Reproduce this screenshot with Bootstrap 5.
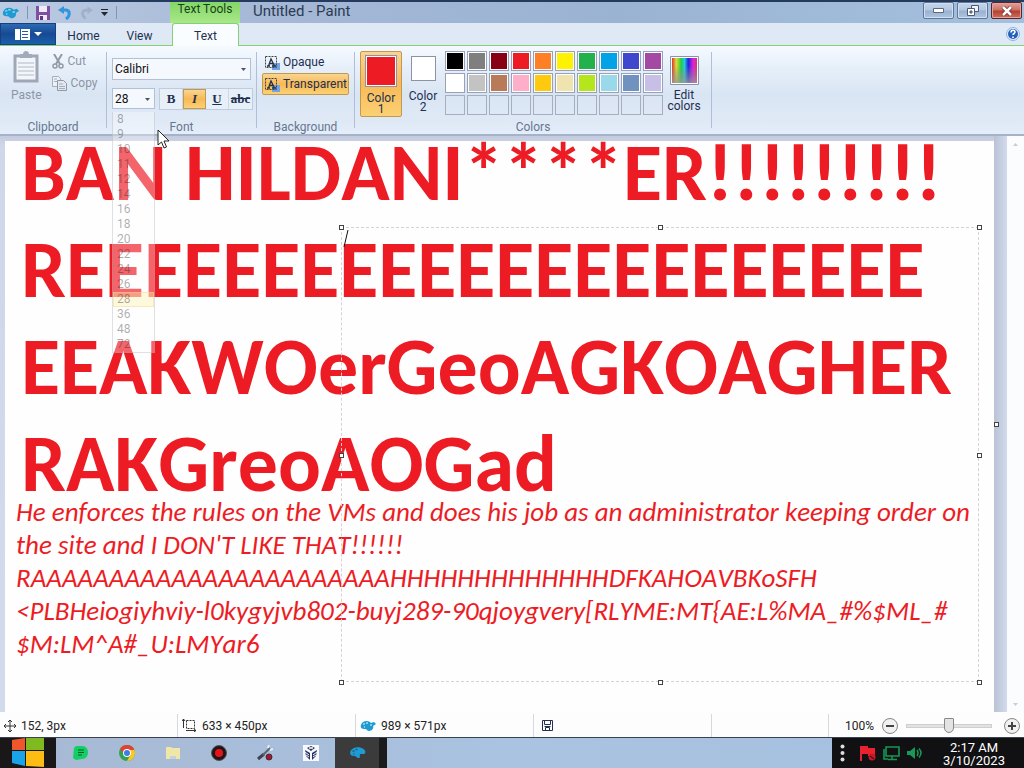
<!DOCTYPE html>
<html lang="en">
<head>
<meta charset="utf-8">
<meta name="viewport" content="width=device-width, initial-scale=1">
<title>Untitled - Paint</title>
<link rel="stylesheet" href="https://cdn.jsdelivr.net/npm/bootstrap@5.3.0/dist/css/bootstrap.min.css">
<style>
body{font:12px/16px Roboto,"Liberation Sans",sans-serif;color:#1e3050;background:#c9d1e5}
button,select,textarea,input{font:inherit;color:inherit;border-radius:0}
button{background:none;border:0;padding:0}
svg{display:block;flex:none}
.titlebar{height:23px;border-top:2px solid #243b5e;background:linear-gradient(90deg,#bccbe2,#a5b8d6 25%,#9bb3d3 60%,#a4c0df)}
.quick{width:170px;padding-left:2px}
.quick .rule{width:1px;height:13px;background:#8394b0}
.tooltab{width:70px;height:21px;background:linear-gradient(#83d765,#a9e889);color:#17421b;text-align:center;line-height:15px}
.apptitle{font-size:15px;line-height:18px;color:#2c3a52;padding-left:13px}
.controls{gap:3px;margin-right:2px}
.winbtn{width:31px;height:17px;border:1px solid #5e7697;border-radius:2px;background:linear-gradient(#c6d6ea,#b2c7e0 48%,#98b1cf 52%,#aec5df);box-shadow:inset 0 0 0 1px #d2dfee}
.winbtn.shut{background:linear-gradient(#dea19a,#cb6f63 48%,#b53d30 52%,#cc6e5b);border-color:#5c2329;box-shadow:inset 0 0 0 1px #e0a49d}
.tabs{height:23px;background:#dfe9f5;border-bottom:1px solid #86cf73}
.tabs .tab{text-align:center;line-height:26px;height:23px}
.tabs .tab.file{width:56px;background:linear-gradient(#2e69b3,#164a93 50%,#1c5fae);border:1px solid #17407e;height:22px}
.tab.home{width:55px}
.tab.view{width:57px}
.tabs .tab.on{width:67px;background:#fafdff;border:1px solid #86cf73;border-bottom:0;border-radius:3px 3px 0 0;line-height:24px}
.ribbon{height:90px;background:linear-gradient(#f5faff,#e6eff9 25%,#dae5f4 55%,#dfe9f6 85%,#e4eefa);border-bottom:2px solid #a6b2c9}
.group{position:relative;padding-top:5px;height:82px;margin-right:1px}
.group::after{content:"";position:absolute;right:-1px;top:6px;bottom:0;width:1px;background:#b0bfd5}
.group .caption{position:absolute;left:0;right:0;bottom:-7px;text-align:center;color:#66768f}
.g-clip{width:106px;color:#8c95a5}
.g-clip .paste{padding-left:11px}
.g-clip .edits{padding-left:10px;padding-top:2px;gap:6px}
.g-font{width:149px;padding-left:5px}
.g-back{width:97px;padding-left:5px}
.g-color{width:356px;padding-left:5px}
.combo{position:relative;border:1px solid #b3c1d6;background:#f5f9fe;color:#111}
.combo.face{width:139px;height:22px;margin-top:7px}
.combo.size{width:43px;height:21px}
.combo select{appearance:none;border:0;background:none;width:100%;height:100%;padding:0 2px;outline:0}
.combo .arrow{position:absolute;right:4px;top:9px;pointer-events:none}
.styles{border:1px solid #c0cbdd;height:22px;background:#e7eff9}
.styles button{width:23px;font:bold 13px/18px "Liberation Serif",serif;border-right:1px solid #cdd7e6}
.styles button.on,.opt.on,.swatch.on{background:linear-gradient(#f9d592,#f8b956 50%,#fbd174);border:1px solid #c29a4f}
.opt{height:22px;width:87px;border:1px solid transparent;border-radius:2px;padding-left:1px;gap:2px}
.swatch{width:42px;height:66px;border:1px solid transparent;border-radius:2px;line-height:11px}
.swatch .chip{display:block;margin:0 auto 6px;border:1px solid #8b93a6;box-shadow:inset 0 0 0 1px #fff}
.swatch .chip.first{width:32px;height:32px;background:#ed1c24;margin-top:1px}
.swatch .chip.second{width:25px;height:25px;background:#fff;margin-bottom:10px}
.palette{display:grid;grid-template-columns:repeat(10,20px);gap:2px;margin-left:1px}
.palette button{width:20px;height:20px;border:1px solid #98a1b5;box-shadow:inset 0 0 0 1px #fff}
.palette .none{box-shadow:none;border-color:#a5afc0}
.sizes{position:absolute;left:-1px;top:23px;width:43px;z-index:5;background:rgba(255,255,255,.32);border:1px solid rgba(150,155,165,.3);border-top:0;color:rgba(30,30,40,.38);list-style:none;margin:0;padding:0}
.sizes li{padding-left:4px;height:15px;line-height:15px}
.sizes .pick{background:rgba(255,240,170,.4);outline:1px solid rgba(235,215,130,.4);outline-offset:-1px}
.mouse{position:absolute;left:44px;top:40px;z-index:9}
.work{min-height:0;background:linear-gradient(#c3cbdd,#cfd7ea 10px,#d2dbed)}
.sheet{position:relative;margin:5px 0 0 5px;background:#fefefe;color:#ed1c24;overflow:hidden}
.sheet p{white-space:pre;font-kerning:none}
.shout{font:bold 80px/97px Carlito,Lato,sans-serif;margin:-17px 0 0 16px}
.rant{font:italic 27px/33px Carlito,Lato,sans-serif;margin:-17px 0 0 11px}
.region{position:absolute;left:336px;top:86px;right:15px;bottom:30px;z-index:3}
.region textarea{width:100%;height:100%;display:block;border:1px dashed #dccfd3;background:none;resize:none;outline:0}
.grip{position:absolute;width:5px;height:5px;border:1px solid #444;background:#fff;margin:-2px}
.gutter{width:13px;position:relative;background:linear-gradient(90deg,#bac3d5,#d2dbec)}
.vscroll{width:17px;background:#fbfcfd;padding:7px 0 6px}
.status{height:26px;background:#fdfdfd;color:#222;border-bottom:1px solid #3a4150;padding-top:2px}
.status .cell{width:178px;border-right:1px solid #d5d9e0;padding-left:4px;gap:5px}
.zoomer{width:86px;appearance:none;background:none;margin:0}
.zoomer::-webkit-slider-runnable-track{height:4px;background:#e2e2e2;border:1px solid #cfcfcf}
.zoomer::-webkit-slider-thumb{appearance:none;width:10px;height:15px;background:#e3e3e3;border:1px solid #888;margin-top:-7px;border-radius:1px 1px 5px 5px}
.taskbar{height:30px;background:linear-gradient(90deg,#a7b8d3,#a9c3e0 50%,#a5c0df 96%,#7f96b2)}
.taskbar .start{width:56px;background:#191717;margin-right:2px}
.taskbar .task{width:46px}
.taskbar .live{width:52px;background:#3b3b3c;border-right:8px solid #1b1b1c;margin-left:1px}
.tray{width:192px;background:#111113;color:#fff;gap:7px;padding-left:8px}
.clock{flex:1;text-align:center;font-size:13px;line-height:13px;padding:3px 6px 0 0}
</style>
<script src="https://cdn.jsdelivr.net/npm/bootstrap@5.3.0/dist/js/bootstrap.bundle.min.js"></script>
</head>
<body class="vh-100 d-flex flex-column overflow-hidden">
<svg width="0" height="0" class="position-absolute" aria-hidden="true">
  <symbol id="pal" viewBox="0 0 16 12"><path d="M1 5C2 1 7 0 10 2l1 1 3-1 2 2-3 2c1 2-1 5-4 5-2 0-2-2-4-2C2 9 0 8 1 5z" fill="#1f9bd4"/><path d="M3 4h2M6 3h2M4 7h1M10 5h2" stroke="#9fdcf5" stroke-width="1.4"/></symbol>
  <symbol id="paldark" viewBox="0 0 16 12"><path d="M1 4C3 0 10-1 14 2c3 2 2 5 0 5l-3 0c-2 0 1 4-2 4-2 0-2-2-4-2C1 9 0 7 1 4z" fill="#1f9bd4"/><path d="M3 4h2M6 2.500h2M4 7h1" stroke="#1c5f88" stroke-width="1.500"/></symbol>
  <symbol id="bgA" viewBox="0 0 17 15"><path d="M8 8h8v7H8z" fill="#6fa3ea"/><path d="M1.500 1.500h11v11h-11z" fill="none" stroke="#444" stroke-dasharray="2 1"/><path d="M3 11h3M8 11h4M4.500 11L7 4l3.500 7M5 8.500h4" fill="none" stroke="#263243" stroke-width="1.300"/></symbol>
  <symbol id="tri" viewBox="0 0 5 3"><path d="M0 0h5L2.500 3z" fill="#4a5364"/></symbol>
</svg>

<header class="titlebar d-flex flex-shrink-0">
  <div class="quick d-flex align-items-center gap-2">
    <svg width="17" height="14"><use href="#pal"/></svg>
    <span class="rule"></span>
    <button aria-label="Save"><svg width="14" height="14" viewBox="0 0 14 14"><path d="M0 0h14v14H0z" fill="#7f4fa2"/><path d="M3 0h8v6H3zM3 9h8v5H3z" fill="#f1eaf7"/><path d="M4 10h3v4H4z" fill="#5c3a7d"/></svg></button>
    <button aria-label="Undo"><svg width="14" height="14" viewBox="0 0 14 14"><path d="M3 4h4c6 0 5 6 1 9" fill="none" stroke="#3295df" stroke-width="3"/><path d="M0 4l6-4v8z" fill="#3295df"/></svg></button>
    <button aria-label="Redo"><svg width="13" height="14" viewBox="0 0 14 14"><path d="M11 4H7C1 4 2 10 6 13" fill="none" stroke="#a0b0c8" stroke-width="3"/><path d="M14 4L8 0v8z" fill="#a0b0c8"/></svg></button>
    <button aria-label="Customize"><svg width="7" height="7" viewBox="0 0 7 7"><path d="M0 0h7v1H0zM0 3h7L3.500 7z" fill="#1f2733"/></svg></button>
    <span class="rule"></span>
  </div>
  <div class="tooltab">Text Tools</div>
  <div class="apptitle flex-grow-1">Untitled - Paint</div>
  <div class="controls d-flex">
    <button class="winbtn d-grid" aria-label="Minimize"><svg class="m-auto" width="11" height="5" viewBox="0 0 11 5"><path d="M.5.5h10v4H.5z" fill="#fff" stroke="#5b6a82"/></svg></button>
    <button class="winbtn d-grid" aria-label="Restore"><svg class="m-auto" width="12" height="11" viewBox="0 0 12 11"><path d="M4.500.5h7v6h-7z" fill="#eef3fa" stroke="#4b5b75"/><path d="M.5 3.500h7v7h-7z" fill="#fff" stroke="#4b5b75"/><path d="M3 6h2v2H3z" fill="#8ba3c3" stroke="#4b5b75"/></svg></button>
    <button class="winbtn shut d-grid" aria-label="Close"><svg class="m-auto" width="12" height="10" viewBox="0 0 12 10"><path d="M2 1l8 8M10 1L2 9" stroke="#6b2a28" stroke-width="4"/><path d="M2 1l8 8M10 1L2 9" stroke="#fff" stroke-width="2.500"/></svg></button>
  </div>
</header>

<nav class="tabs d-flex flex-shrink-0" aria-label="Ribbon tabs">
  <button class="tab file d-flex align-items-center justify-content-center gap-1" aria-label="Paint menu"><svg width="15" height="11" viewBox="0 0 15 11"><path d="M0 0h15v11H0z" fill="#fff"/><path d="M5.500 0v11M7 2.500h6M7 5.500h6M7 8.500h6" stroke="#2459a3"/></svg><svg width="8" height="4" viewBox="0 0 8 4"><path d="M0 0h8L4 4z" fill="#fff"/></svg></button>
  <button class="tab home">Home</button>
  <button class="tab view">View</button>
  <button class="tab on ms-1">Text</button>
  <button class="ms-auto me-1" aria-label="Help"><svg width="14" height="14" viewBox="0 0 14 14"><circle cx="7" cy="7" r="6.500" fill="#e4ecf8" stroke="#8fb2e4"/><circle cx="7" cy="7" r="5" fill="#2360bd"/><path d="M5 5.500c0-3 4-3 4-.5 0 1.500-2 1.500-2 3M7 9.500V11" fill="none" stroke="#fff" stroke-width="1.600"/></svg></button>
</nav>

<section class="ribbon d-flex flex-shrink-0" aria-label="Ribbon">
  <div class="group g-clip d-flex">
    <button class="paste align-self-start" disabled><svg class="mx-auto mb-1" width="26" height="32" viewBox="0 0 26 32"><path d="M2 5h22v25H2z" fill="#f2f5fa" stroke="#a0a8b7" stroke-width="3"/><path d="M5 12h16M5 16h16M5 20h16M5 24h16" stroke="#b2bbc9"/><path d="M7 3h3c0-4 6-4 6 0h3v4H7z" fill="#a2abba"/></svg>Paste</button>
    <div class="edits d-flex flex-column">
      <button class="d-flex gap-1 align-items-center" disabled><svg width="12" height="15" viewBox="0 0 12 15"><path d="M2 0l6 10M10 0L4 10" stroke="#9199a6" stroke-width="2"/><circle cx="3" cy="12" r="2" fill="none" stroke="#9199a6" stroke-width="1.500"/><circle cx="9" cy="12" r="2" fill="none" stroke="#9199a6" stroke-width="1.500"/></svg>Cut</button>
      <button class="d-flex gap-1 align-items-center" disabled><svg width="15" height="15" viewBox="0 0 15 15"><path d="M.5.500h6l2 2v8h-8z" fill="#edf1f7" stroke="#a6aebb"/><path d="M5.500 4.500h6l3 3v7h-9z" fill="#e4e9f1" stroke="#8e97a6"/><path d="M7 8h4M7 10.500h6M7 12.500h6M2 3h3M2 5.500h3" stroke="#a6aebb"/></svg>Copy</button>
    </div>
    <div class="caption">Clipboard</div>
  </div>
  <div class="group g-font">
    <div class="combo face"><select aria-label="Font family"><option>Calibri</option></select><svg class="arrow" width="5" height="3"><use href="#tri"/></svg></div>
    <div class="d-flex mt-2 gap-1">
      <div class="combo size"><select aria-label="Font size"><option>28</option></select><svg class="arrow" width="5" height="3"><use href="#tri"/></svg>
        <ul class="sizes"><li>8<li>9<li>10<li>11<li>12<li>14<li>16<li>18<li>20<li>22<li>24<li>26<li class="pick">28<li>36<li>48<li>72</ul>
        <svg class="mouse" width="13" height="20" viewBox="0 0 13 20"><path d="M1 1v15l3.500-3 2.500 6 2.500-1-2.500-6h5z" fill="#fff" stroke="#222"/></svg>
      </div>
      <div class="styles d-flex"><button>B</button><button class="on fst-italic">I</button><button><u>U</u></button><button class="border-0"><s>abc</s></button></div>
    </div>
    <div class="caption">Font</div>
  </div>
  <div class="group g-back">
    <button class="opt d-flex align-items-center"><svg width="17" height="15"><use href="#bgA"/></svg>Opaque</button>
    <button class="opt on d-flex align-items-center"><svg width="17" height="15"><use href="#bgA"/></svg>Transparent</button>
    <div class="caption">Background</div>
  </div>
  <div class="group g-color d-flex align-items-start">
    <button class="swatch on"><span class="chip first"></span>Color<br>1</button>
    <button class="swatch"><span class="chip second"></span>Color<br>2</button>
    <div class="palette" id="palette"></div>
    <button class="swatch"><svg class="mx-auto mb-1" width="29" height="30" viewBox="0 0 29 30"><defs><linearGradient id="hue"><stop stop-color="#d33"/><stop offset=".17" stop-color="#dd3"/><stop offset=".37" stop-color="#2c4"/><stop offset=".5" stop-color="#2cd"/><stop offset=".65" stop-color="#22d"/><stop offset=".85" stop-color="#d2d"/><stop offset="1" stop-color="#d36"/></linearGradient><linearGradient id="fade" x2="0" y2="1"><stop offset=".3" stop-color="#888" stop-opacity="0"/><stop offset="1" stop-color="#999" stop-opacity=".8"/></linearGradient></defs><path d="M.5.500h28v28H.5z" fill="#fff" stroke="#8b93a6"/><path d="M2 2h25v25H2z" fill="url(#hue)"/><path d="M2 2h25v25H2z" fill="url(#fade)"/></svg>Edit<br>colors</button>
    <div class="caption">Colors</div>
  </div>
</section>

<main class="work d-flex flex-grow-1">
  <div class="sheet flex-grow-1">
    <p class="shout">BAN HILDANI****ER!!!!!!!!!
REEEEEEEEEEEEEEEEEEEEEE
EEAKWOerGeoAGKOAGHER
RAKGreoAOGad</p>
    <p class="rant">He enforces the rules on the VMs and does his job as an administrator keeping order on
the site and I DON'T LIKE THAT!!!!!!
RAAAAAAAAAAAAAAAAAAAAAAAHHHHHHHHHHHHHDFKAHOAVBKoSFH
&lt;PLBHeiogiyhviy-l0kygyjvb802-buyj289-90qjoygvery[RLYME:MT{AE:L%MA_#%$ML_#
$M:LM^A#_U:LMYar6</p>
    <div class="region">
      <textarea aria-label="Text"></textarea>
      <svg class="position-absolute top-0 start-0" width="9" height="22" viewBox="0 0 9 22"><path d="M7 3L3 20" stroke="#111"/></svg>
      <i class="grip top-0 start-0"></i><i class="grip top-0 start-50"></i><i class="grip top-0 start-100"></i>
      <i class="grip top-50 start-0"></i><i class="grip top-50 start-100"></i>
      <i class="grip top-100 start-0"></i><i class="grip top-100 start-50"></i><i class="grip top-100 start-100"></i>
    </div>
  </div>
  <div class="gutter"><i class="grip top-50 start-0 ms-0"></i></div>
  <div class="vscroll d-flex flex-column justify-content-between align-items-center"><svg width="5" height="3" viewBox="0 0 5 3"><path d="M0 3h5L2.500 0z" fill="#ccc"/></svg><svg width="5" height="3" viewBox="0 0 5 3"><path d="M0 0h5L2.500 3z" fill="#ccc"/></svg></div>
</main>

<footer class="status d-flex flex-shrink-0">
  <div class="cell d-flex align-items-center"><svg width="12" height="12" viewBox="0 0 12 12"><path d="M6 0v12M0 6h12M4 2l2-2 2 2M4 10l2 2 2-2M2 4L0 6l2 2M10 4l2 2-2 2" fill="none" stroke="#333"/></svg><span>152, 3px</span></div>
  <div class="cell d-flex align-items-center"><svg width="15" height="13" viewBox="0 0 15 13"><path d="M4.500 1.500h8v8h-8z" fill="none" stroke="#333" stroke-dasharray="2 1"/><path d="M1.500 0v9M0 2l1.500-2L3 2M4 11.500h10M12 10l2 1.500-2 1.500" fill="none" stroke="#333"/></svg>633 × 450px</div>
  <div class="cell d-flex align-items-center"><svg width="16" height="12"><use href="#pal"/></svg>989 × 571px</div>
  <div class="cell d-flex align-items-center ps-2"><svg width="11" height="11" viewBox="0 0 11 11"><path d="M.5.500h10v10H.5zM2.500.5v4h6v-4M3.500 10.500v-3h4v3M2.500 6.500h6" fill="none" stroke="#253050"/></svg></div>
  <div class="cell flex-grow-1 w-auto"></div>
  <div class="d-flex align-items-center ps-3 pe-1 gap-2">
    <span>100%</span>
    <button aria-label="Zoom out"><svg width="16" height="16" viewBox="0 0 16 16"><circle cx="8" cy="8" r="7.500" fill="#f1f1f1" stroke="#888"/><path d="M4 8h8" stroke="#444" stroke-width="2"/></svg></button>
    <input class="zoomer" type="range" aria-label="Zoom" value="50">
    <button aria-label="Zoom in" class="ms-1"><svg width="16" height="16" viewBox="0 0 16 16"><circle cx="8" cy="8" r="7.500" fill="#f1f1f1" stroke="#888"/><path d="M4 8h8M8 4v8" stroke="#444" stroke-width="2"/></svg></button>
  </div>
</footer>

<nav class="taskbar d-flex flex-shrink-0" aria-label="Taskbar">
  <button class="start d-grid" aria-label="Start"><svg class="m-auto" width="32" height="30" viewBox="0 0 32 30"><path d="M0 2l13-2v12H0z" fill="#f1562a"/><path d="M14 0h18v12H14z" fill="#7fba20"/><path d="M0 13h13v15L0 25z" fill="#19a3e8"/><path d="M14 13h18v16l-18-1z" fill="#fdbb13"/></svg></button>
  <button class="task d-grid" aria-label="Notes"><svg class="m-auto" width="16" height="14" viewBox="0 0 16 14"><path d="M1 2l2-2h6c8 0 8 13 0 13l-6 1-3-2z" fill="#12cf63"/><path d="M5 4h6M5 6.500h6M5 9h4" stroke="#075c2d"/></svg></button>
  <button class="task d-grid" aria-label="Chrome"><svg class="m-auto" width="16" height="16" viewBox="0 0 16 16"><circle cx="8" cy="8" r="8" fill="#35a252"/><path d="M1 4a8 8 0 0 1 14 0L15 5H8L5 9z" fill="#df4334"/><path d="M15.400 5A8 8 0 0 1 8 16l3.500-6L10 5z" fill="#fbc91d"/><circle cx="8" cy="8" r="4" fill="#fff"/><circle cx="8" cy="8" r="3" fill="#3c7de6"/></svg></button>
  <button class="task d-grid" aria-label="Files"><svg class="m-auto" width="14" height="14" viewBox="0 0 14 14"><path d="M0 1h5l1 1h8v11H0z" fill="#f0e6a8"/><path d="M4 10h6v3H4z" fill="#c4d2dc"/></svg></button>
  <button class="task d-grid" aria-label="Recorder"><svg class="m-auto" width="16" height="16" viewBox="0 0 16 16"><circle cx="8" cy="8" r="7.500" fill="#241417" stroke="#555"/><circle cx="8" cy="8" r="4" fill="#e5141c"/></svg></button>
  <button class="task d-grid" aria-label="Tools"><svg class="m-auto" width="16" height="16" viewBox="0 0 16 16"><path d="M1 14l6-5" stroke="#3c434f" stroke-width="3"/><path d="M6 10l7-7" stroke="#5b6472" stroke-width="2"/><path d="M11 3l1-3M13 5l3-1" stroke="#e8edf3" stroke-width="2"/><circle cx="12" cy="12" r="3" fill="#b30d2f" stroke="#333"/></svg></button>
  <button class="task d-grid" aria-label="VM"><svg class="m-auto" width="16" height="16" viewBox="0 0 16 16"><path d="M0 0h16v16H0z" fill="#f7f9ff"/><path d="M2 5l5 3v7l-4-4zM14 5L9 8v7l4-4zM4 3l4-2 4 2-4 3z" fill="#26345e"/><path d="M2 7l4 3M14 7l-4 3M3 10l3 2M13 10l-3 2M6 2l4 2M10 2L6 4" stroke="#f7f9ff"/></svg></button>
  <button class="live d-grid" aria-label="Paint"><svg class="m-auto" width="17" height="12"><use href="#paldark"/></svg></button>
  <div class="tray d-flex align-items-center ms-auto">
    <svg width="5" height="18" viewBox="0 0 5 18"><g fill="#ddd"><circle cx="2.500" cy="2.500" r="2"/><circle cx="2.500" cy="9" r="2"/><circle cx="2.500" cy="15.500" r="2"/></g></svg>
    <svg class="ms-2" width="16" height="16" viewBox="0 0 16 16"><path d="M1 1v15" stroke="#e02733" stroke-width="2"/><path d="M2 1h6v2h7v8H8V9H2z" fill="#ec202e"/><circle cx="12" cy="12" r="3.500" fill="#c71828"/><path d="M10 11l4 3" stroke="#111"/></svg>
    <svg width="17" height="15" viewBox="0 0 17 15"><path d="M3 1h13v9H3zM9 10v3M5 13.500h9M1 3v10h4" fill="none" stroke="#169754" stroke-width="1.600"/></svg>
    <svg width="16" height="12" viewBox="0 0 16 12"><path d="M0 4h3l5-4v12L3 8H0z" fill="#19985a"/><path d="M10 3q2 3 0 6M12 1.500q4 4.500 0 9" fill="none" stroke="#19985a" stroke-width="1.500"/></svg>
    <div class="clock align-self-start">2:17 AM<br>3/10/2023</div>
  </div>
</nav>
<script>
const colours=['#000','#7f7f7f','#880015','#ed1c24','#ff7f27','#fff200','#22b14c','#00a2e8','#3f48cc','#a349a4','#fff','#c3c3c3','#b97a57','#ffaec9','#ffc90e','#efe4b0','#b5e61d','#99d9ea','#7092be','#c8bfe7'];
const palette=document.getElementById('palette');
for(let i=0;i<30;i++){const b=document.createElement('button');b.setAttribute('aria-label','Colour '+(i+1));if(colours[i])b.style.backgroundColor=colours[i];else b.className='none';palette.append(b)}
</script>
</body>
</html>
